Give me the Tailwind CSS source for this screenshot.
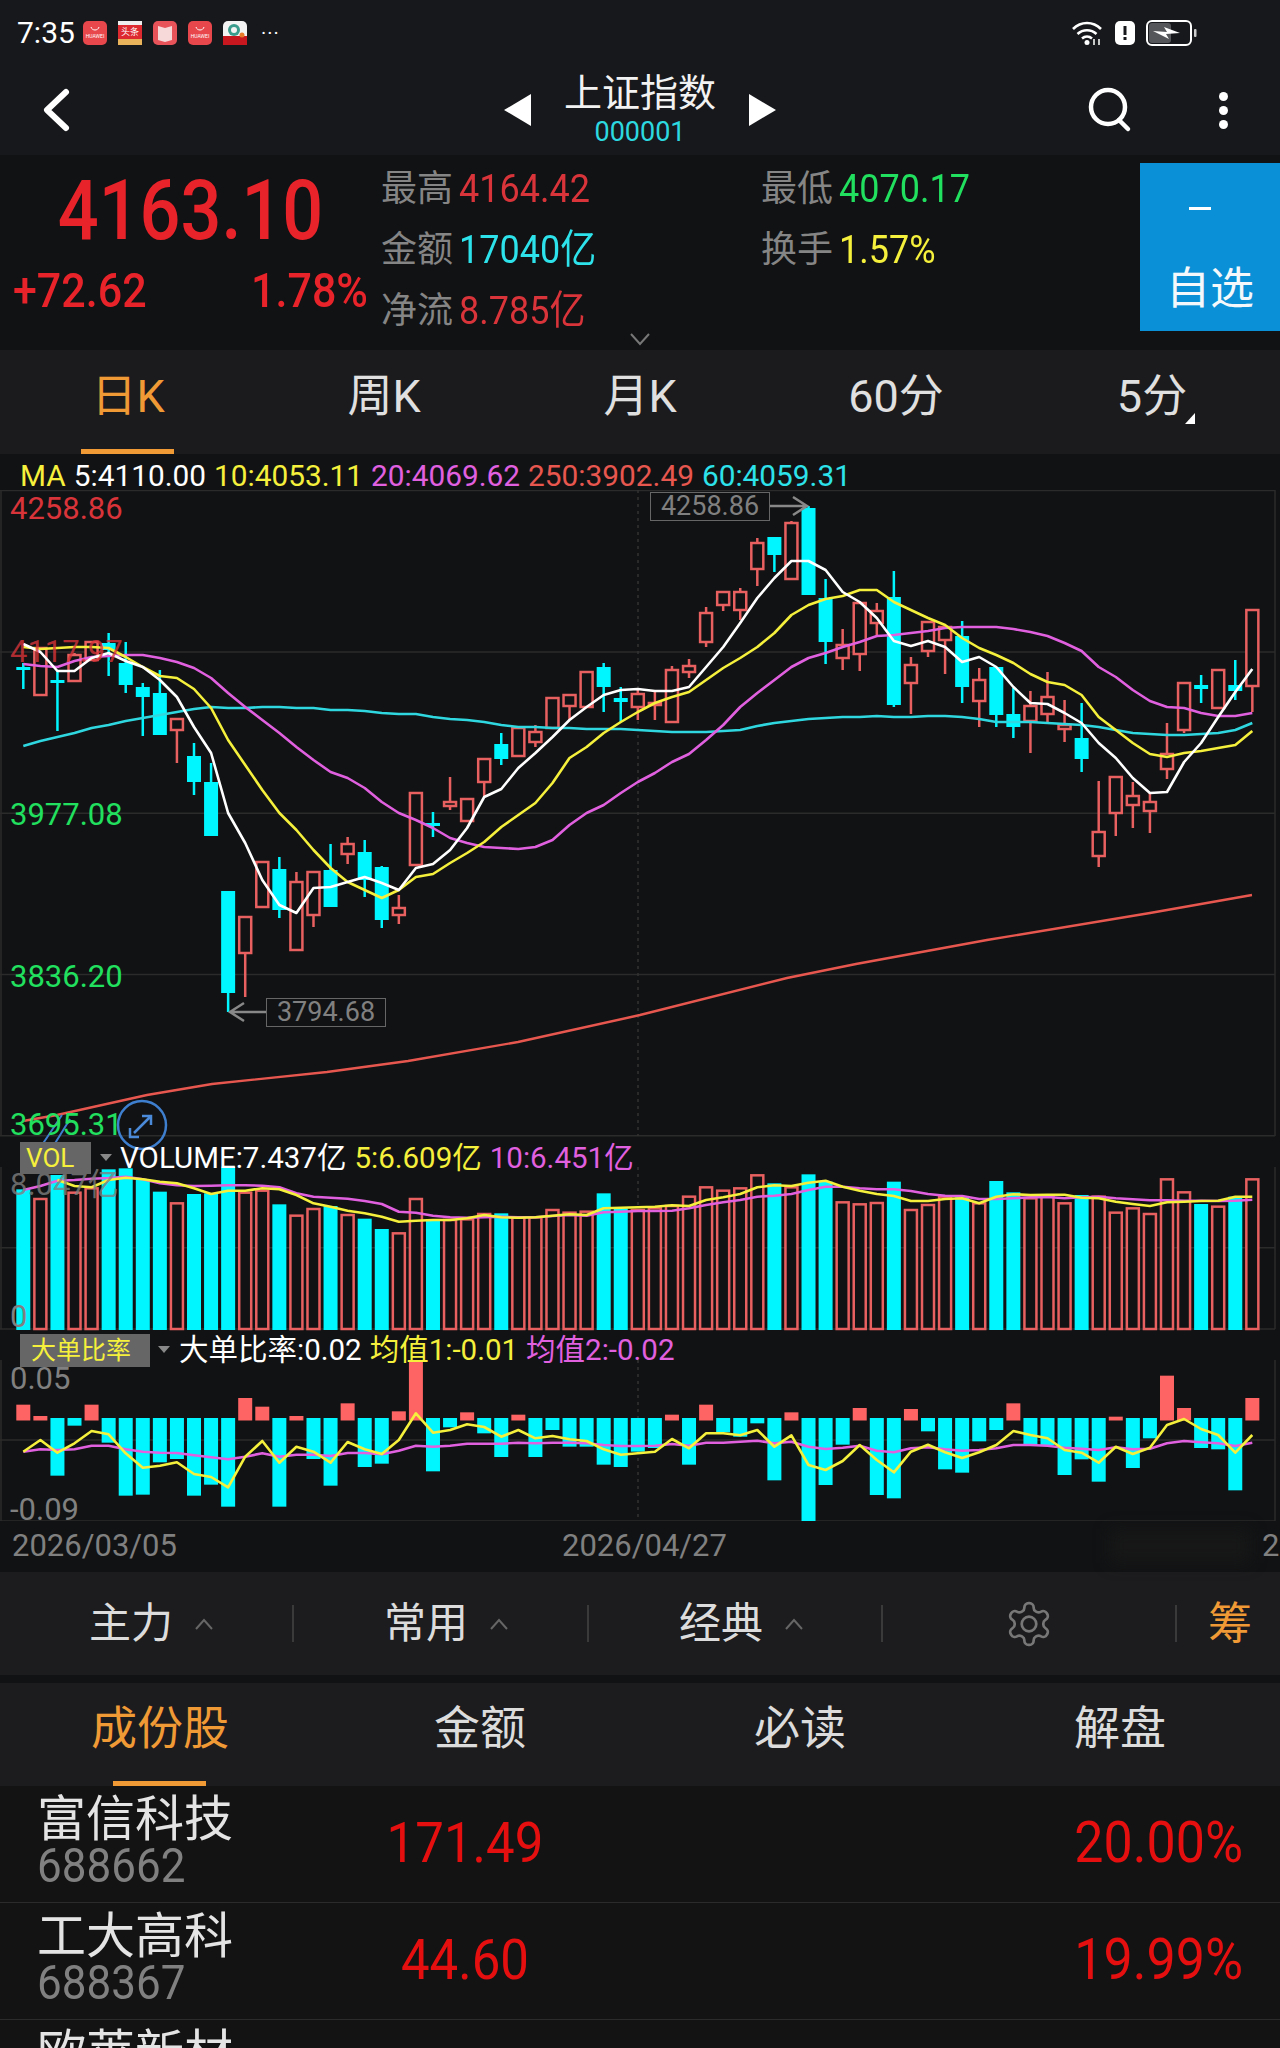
<!DOCTYPE html>
<html lang="zh">
<head>
    <meta charset="UTF-8">
    <title>上证指数</title>
    <script src="https://cdn.jsdelivr.net/npm/@tailwindcss/browser@4"></script>
</head>
<body class="bg-[#111214]">
<div class="w-[1280px] h-[2048px] overflow-hidden bg-[#111213] text-white [font-family:Roboto,'Noto_Sans_CJK_SC',sans-serif]">

    <!-- status bar + nav -->
    <div class="h-[155px] bg-[#17181b]">
        <div class="h-[66px] flex items-center pl-[17px] pr-[82px]">
            <span class="text-[30px] leading-none w-[66px]">7:35</span>
            <div class="flex gap-[11px] items-center">
                <svg width="24" height="24" viewBox="0 0 24 24"><rect width="24" height="24" rx="5" fill="#e8474c"/><path d="M8 6c1 4 7 4 8 0" stroke="#fff" fill="none"/><text x="12" y="17" font-size="5" fill="#fff" text-anchor="middle">HUAWEI</text></svg>
                <svg width="24" height="24" viewBox="0 0 24 24"><rect width="24" height="24" rx="5" fill="#dd2a30"/><rect width="24" height="4" fill="#eee"/><rect y="18" width="24" height="6" fill="#e9b35c"/><text x="12" y="14" font-size="9" fill="#fff" text-anchor="middle">头条</text></svg>
                <svg width="24" height="24" viewBox="0 0 24 24"><rect width="24" height="24" rx="5" fill="#e8535a"/><path d="M5 5l7 2 7-2v14l-7 2-7-2z" fill="#f7d9da"/></svg>
                <svg width="24" height="24" viewBox="0 0 24 24"><rect width="24" height="24" rx="5" fill="#e8474c"/><path d="M8 6c1 4 7 4 8 0" stroke="#fff" fill="none"/><text x="12" y="17" font-size="5" fill="#fff" text-anchor="middle">HUAWEI</text></svg>
                <svg width="24" height="24" viewBox="0 0 24 24"><rect width="24" height="24" rx="5" fill="#f3f3f3"/><rect y="15" width="24" height="9" fill="#c8171f"/><circle cx="11" cy="9" r="6" fill="#3a9c8c"/><circle cx="11" cy="9" r="3" fill="#f3f3f3"/><circle cx="19" cy="14" r="2.5" fill="#e87a2a"/></svg>
            </div>
            <span class="ml-[14px] text-[20px] leading-none tracking-[1px]">···</span>
            <div class="ml-auto flex items-center gap-[11px]">
                <svg width="32" height="26" viewBox="0 0 32 26" fill="none" stroke="#fff" stroke-width="2.6"><path d="M1 9c8-8 20-8 28 0"/><path d="M5.5 14c5.500-5 13.500-5 19 0"/><path d="M10 18.500c3-2.500 7-2.500 10 0"/><circle cx="15" cy="22.500" r="2.500" fill="#fff" stroke="none"/><path d="M22 19v6M27 19v6" stroke-width="1.500"/></svg>
                <svg width="20" height="24" viewBox="0 0 20 24"><rect width="20" height="24" rx="5" fill="#fff"/><rect x="8.500" y="5" width="3" height="9" fill="#17181b"/><rect x="8.500" y="16" width="3" height="3" fill="#17181b"/></svg>
                <svg width="52" height="26" viewBox="0 0 52 26" fill="none"><rect x="1" y="1" width="44" height="24" rx="5" stroke="#fff" stroke-width="2"/><rect x="3" y="3" width="22" height="20" rx="3" fill="#55565a"/><path d="M7 11l14 1-3-5 16 6-14 1 3 5z" fill="#fff"/><rect x="48" y="9" width="2.500" height="8" rx="1" fill="#ccc"/></svg>
            </div>
        </div>
        <div class="h-[88px] grid grid-cols-3 items-center">
            <div class="pl-[40px]">
                <svg width="34" height="46" viewBox="0 0 34 46" fill="none" stroke="#fff" stroke-width="6" stroke-linecap="round" stroke-linejoin="round"><path d="M26 5L7 23l19 18"/></svg>
            </div>
            <div class="flex items-center justify-center gap-[29px]">
                <svg width="27" height="32" viewBox="0 0 27 32"><path d="M27 0v32L0 16z" fill="#fff"/></svg>
                <div class="flex flex-col items-center w-[160px]">
                    <span class="text-[38px] leading-[44px] text-[#f2f2f2]">上证指数</span>
                    <span class="text-[27px] leading-[34px] text-[#2dd9e0]">000001</span>
                </div>
                <svg width="27" height="32" viewBox="0 0 27 32"><path d="M0 0v32l27-16z" fill="#fff"/></svg>
            </div>
            <div class="flex items-center justify-end pr-[52px] gap-[87px]">
                <svg width="44" height="46" viewBox="0 0 44 46" fill="none" stroke="#fff" stroke-width="4.500" stroke-linecap="round"><circle cx="20" cy="20" r="17"/><path d="M31 33l9 9"/></svg>
                <div class="flex flex-col gap-[5px]">
                    <div class="w-[9px] h-[9px] rounded-full bg-white"></div>
                    <div class="w-[9px] h-[9px] rounded-full bg-white"></div>
                    <div class="w-[9px] h-[9px] rounded-full bg-white"></div>
                </div>
            </div>
        </div>
        <div class="h-px"></div>
    </div>

    <!-- quote -->
    <div class="relative h-[195px] flex bg-[#111213]">
        <div class="w-[381px] flex flex-col">
            <div class="mt-[20px] text-center text-[72px] leading-[72px] font-medium text-[#e8232a] scale-y-115">4163.10</div>
            <div class="mt-[18px] flex justify-between px-[13px] text-[43px] leading-[50px] font-medium text-[#e8232a]">
                <span class="scale-y-110">+72.62</span><span class="scale-y-110">1.78%</span>
            </div>
        </div>
        <div class="w-[380px] flex flex-col pt-[4px] text-[36px] leading-[61px]">
            <div class="flex gap-[6px]"><span class="text-[#858585]">最高</span><span class="text-[#d8343a] scale-y-110">4164.42</span></div>
            <div class="flex gap-[6px]"><span class="text-[#858585]">金额</span><span class="text-[#2de2ea] scale-y-110">17040亿</span></div>
            <div class="flex gap-[6px]"><span class="text-[#858585]">净流</span><span class="text-[#d8343a] scale-y-110">8.785亿</span></div>
        </div>
        <div class="w-[519px] flex">
            <div class="flex flex-col pt-[4px] text-[36px] leading-[61px]">
                <div class="flex gap-[6px]"><span class="text-[#858585]">最低</span><span class="text-[#22e05f] scale-y-110">4070.17</span></div>
                <div class="flex gap-[6px]"><span class="text-[#858585]">换手</span><span class="text-[#f5f03c] scale-y-110">1.57%</span></div>
            </div>
            <div class="ml-auto mt-[8px] w-[140px] h-[168px] bg-[#0a90d6] flex flex-col items-center pt-[44px]">
                <div class="mr-[20px] w-[22px] h-[3px] bg-white"></div>
                <span class="mt-[54px] text-[44px] leading-[50px] text-[#f4f8fb]">自选</span>
            </div>
        </div>
        <svg class="absolute left-[630px] top-[177px]" width="20" height="14" viewBox="0 0 20 14" fill="none" stroke="#777" stroke-width="2"><path d="M1 2l9 10 9-10"/></svg>
    </div>

    <!-- period tabs -->
    <div class="h-[104px] grid grid-cols-5 bg-[#1b1b1d] text-[45px] leading-[48px] text-[#e0e0e0]">
        <div class="relative flex justify-center pt-[23px] text-[#f09a36]">日K<div class="absolute bottom-0 left-[81px] w-[93px] h-[5px] bg-[#f09a36]"></div></div>
        <div class="flex justify-center pt-[23px]">周K</div>
        <div class="flex justify-center pt-[23px]">月K</div>
        <div class="flex justify-center pt-[23px]">60分</div>
        <div class="relative flex justify-center pt-[23px]">5分<div class="absolute left-[161px] top-[63px] w-0 h-0 border-l-[10px] border-l-transparent border-b-[11px] border-b-white"></div></div>
    </div>

    <!-- MA legend -->
    <div class="h-[36px] flex gap-[8px] pl-[20px] text-[29.8px] leading-[43px] whitespace-nowrap">
        <span class="text-[#f5f03c]">MA</span>
        <span class="text-white">5:4110.00</span>
        <span class="text-[#f5f03c]">10:4053.11</span>
        <span class="text-[#e060e0]">20:4069.62</span>
        <span class="text-[#e8574f]">250:3902.49</span>
        <span class="text-[#2de2ea]">60:4059.31</span>
    </div>

    <!-- charts -->
    <div class="relative h-[1031px]">
        <svg id="chart" class="absolute inset-0" width="1280" height="1031" viewBox="0 490 1280 1031"></svg>

        <span class="absolute left-[10px] top-[1px] text-[31px] leading-[36px] text-[#d8343a]">4258.86</span>
        <span class="absolute left-[10px] top-[144px] text-[31px] leading-[36px] text-[#d8343a]/80">4117.97</span>
        <span class="absolute left-[10px] top-[307px] text-[31px] leading-[36px] text-[#22e05f]">3977.08</span>
        <span class="absolute left-[10px] top-[469px] text-[31px] leading-[36px] text-[#22e05f]">3836.20</span>
        <span class="absolute left-[10px] top-[617px] text-[31px] leading-[36px] text-[#22e05f]">3695.31</span>
        <span class="absolute left-[10px] top-[677px] text-[31px] leading-[36px] text-[#808080]/80">8.047亿</span>
        <span class="absolute left-[10px] top-[809px] text-[31px] leading-[36px] text-[#808080]">0</span>
        <span class="absolute left-[10px] top-[871px] text-[31px] leading-[36px] text-[#808080]">0.05</span>
        <span class="absolute left-[10px] top-[1002px] text-[31px] leading-[36px] text-[#808080]">-0.09</span>

        <div class="absolute left-[650px] top-[2px] w-[120px] h-[29px] border border-[#666] flex items-center justify-center text-[27px] text-[#808080]">4258.86</div>
        <div class="absolute left-[266px] top-[508px] w-[120px] h-[29px] border border-[#666] flex items-center justify-center text-[27px] text-[#808080]">3794.68</div>

        <div class="absolute left-[20px] top-[652px] w-[71px] h-[32px] bg-[#666] flex items-center pl-[6px] text-[26px] text-[#f5f03c]">VOL</div>
        <div class="absolute left-[100px] top-[664px] w-0 h-0 border-x-[6px] border-x-transparent border-t-[7px] border-t-[#888]"></div>
        <div class="absolute left-[120px] top-[650px] flex gap-[8px] text-[29.5px] leading-[36px] whitespace-nowrap">
            <span class="text-white">VOLUME:7.437亿</span>
            <span class="text-[#f5f03c]">5:6.609亿</span>
            <span class="text-[#e060e0]">10:6.451亿</span>
        </div>

        <div class="absolute left-[20px] top-[844px] w-[130px] h-[33px] bg-[#666] flex items-center pl-[11px] text-[25px] text-[#f5f03c]">大单比率</div>
        <div class="absolute left-[158px] top-[856px] w-0 h-0 border-x-[6px] border-x-transparent border-t-[7px] border-t-[#888]"></div>
        <div class="absolute left-[179px] top-[842px] flex gap-[8px] text-[29.5px] leading-[36px] whitespace-nowrap">
            <span class="text-white">大单比率:0.02</span>
            <span class="text-[#f5f03c]">均值1:-0.01</span>
            <span class="text-[#e060e0]">均值2:-0.02</span>
        </div>
    </div>

    <!-- dates -->
    <div class="relative h-[51px] text-[31px] leading-[50px] text-[#808080]">
        <span class="absolute left-[12px] top-0">2026/03/05</span>
        <span class="absolute left-[562px] top-0">2026/04/27</span>
        <div class="absolute left-[1110px] top-[8px] w-[140px] h-[34px] bg-[#1a1a1a]/60 blur-sm"></div>
        <span class="absolute left-[1262px] top-0">2</span>
    </div>

    <!-- toolbar -->
    <div class="h-[103px] flex items-center bg-[#1c1c1e] text-[42px] leading-[46px] text-[#dcdcdc]">
        <div class="w-[292px] flex items-center pl-[89px] gap-[22px]">主力<svg width="18" height="12" viewBox="0 0 18 12" fill="none" stroke="#666" stroke-width="2"><path d="M1 11l8-9 8 9"/></svg></div>
        <div class="h-[37px] w-[2px] bg-[#3a3a3a]"></div>
        <div class="w-[293px] flex items-center pl-[90px] gap-[22px]">常用<svg width="18" height="12" viewBox="0 0 18 12" fill="none" stroke="#666" stroke-width="2"><path d="M1 11l8-9 8 9"/></svg></div>
        <div class="h-[37px] w-[2px] bg-[#3a3a3a]"></div>
        <div class="w-[292px] flex items-center pl-[90px] gap-[22px]">经典<svg width="18" height="12" viewBox="0 0 18 12" fill="none" stroke="#666" stroke-width="2"><path d="M1 11l8-9 8 9"/></svg></div>
        <div class="h-[37px] w-[2px] bg-[#3a3a3a]"></div>
        <div class="w-[292px] flex items-center justify-center">
            <svg width="50" height="50" viewBox="0 0 24 24" fill="none" stroke="#777" stroke-width="1.300"><path d="M12.220 2h-.44a2 2 0 0 0-2 2v.18a2 2 0 0 1-1 1.730l-.43.25a2 2 0 0 1-2 0l-.15-.08a2 2 0 0 0-2.730.73l-.22.38a2 2 0 0 0 .73 2.730l.15.1a2 2 0 0 1 1 1.720v.51a2 2 0 0 1-1 1.740l-.15.09a2 2 0 0 0-.73 2.730l.22.38a2 2 0 0 0 2.730.73l.15-.08a2 2 0 0 1 2 0l.43.25a2 2 0 0 1 1 1.730V20a2 2 0 0 0 2 2h.44a2 2 0 0 0 2-2v-.18a2 2 0 0 1 1-1.730l.43-.25a2 2 0 0 1 2 0l.15.08a2 2 0 0 0 2.730-.73l.22-.39a2 2 0 0 0-.73-2.730l-.15-.08a2 2 0 0 1-1-1.740v-.5a2 2 0 0 1 1-1.740l.15-.09a2 2 0 0 0 .73-2.730l-.22-.38a2 2 0 0 0-2.730-.73l-.15.08a2 2 0 0 1-2 0l-.43-.25a2 2 0 0 1-1-1.730V4a2 2 0 0 0-2-2z"/><circle cx="12" cy="12" r="3.500"/></svg>
        </div>
        <div class="h-[37px] w-[2px] bg-[#3a3a3a]"></div>
        <div class="pl-[31px] text-[44px] text-[#f09a36]">筹</div>
    </div>
    <div class="h-[8px] bg-[#111213]"></div>

    <!-- bottom tabs -->
    <div class="h-[103px] grid grid-cols-4 bg-[#1c1c1e] text-[46px] leading-[50px] text-[#dcdcdc]">
        <div class="relative flex justify-center pt-[20px] text-[#f09a36]">成份股<div class="absolute bottom-0 left-[113px] w-[93px] h-[5px] bg-[#f09a36]"></div></div>
        <div class="flex justify-center pt-[20px]">金额</div>
        <div class="flex justify-center pt-[20px]">必读</div>
        <div class="flex justify-center pt-[20px]">解盘</div>
    </div>

    <!-- stock rows -->
    <div class="h-[117px] flex border-b border-[#2b2b2b] bg-[#131314]">
        <div class="w-[350px] pl-[37px] flex flex-col pt-[8px]">
            <span class="text-[49px] leading-[52px] text-[#e4e4e4]">富信科技</span>
            <span class="text-[44px] leading-[41px] text-[#808080] scale-y-110 origin-left">688662</span>
        </div>
        <div class="w-[230px] text-center text-[51px] leading-[114px] text-[#e60f0f] scale-y-110">171.49</div>
        <div class="ml-auto pr-[37px] text-[52px] leading-[114px] text-[#e60f0f] scale-y-110">20.00%</div>
    </div>
    <div class="h-[117px] flex border-b border-[#2b2b2b] bg-[#131314]">
        <div class="w-[350px] pl-[37px] flex flex-col pt-[8px]">
            <span class="text-[49px] leading-[52px] text-[#e4e4e4]">工大高科</span>
            <span class="text-[44px] leading-[41px] text-[#808080] scale-y-110 origin-left">688367</span>
        </div>
        <div class="w-[230px] text-center text-[51px] leading-[114px] text-[#e60f0f] scale-y-110">44.60</div>
        <div class="ml-auto pr-[37px] text-[52px] leading-[114px] text-[#e60f0f] scale-y-110">19.99%</div>
    </div>
    <div class="h-[60px] pl-[37px] pt-[8px] bg-[#131314] text-[49px] leading-[52px] text-[#e4e4e4]">欧莱新材</div>
</div>

<script>
    // chart data read off the screenshot, in page pixels
    const UP = '#e86060', DOWN = '#00f6ff';
    const X0 = 23.3, DX = 17.07;
    const xAt = i => X0 + DX * i;

    // [kind, high, bodyTop, bodyBottom, low]
    const candles = [
        ['c',663,667,670,689],['r',648,648,695,695],['c',670,680,683,731],['r',653,655,681,681],['r',642,642,660,660],
        ['c',633,643,650,676],['c',642,663,685,693],['c',683,687,697,736],['c',670,693,735,735],['r',719,719,730,763],
        ['c',743,756,782,795],['c',763,782,836,836],['c',891,891,993,1012],['r',917,917,953,997],['r',862,862,907,907],
        ['c',857,869,910,918],['r',872,882,950,950],['r',872,872,915,927],['c',844,870,907,907],['r',837,844,854,864],
        ['c',840,852,880,897],['c',866,867,920,928],['r',895,908,915,924],['r',793,793,865,865],['c',812,823,826,837],
        ['r',777,802,806,810],['r',799,799,821,821],['r',759,759,782,797],['c',733,744,759,765],['r',728,728,756,756],
        ['r',725,732,742,747],['r',698,698,728,728],['r',695,695,706,720],['r',672,672,707,707],['c',663,667,687,712],
        ['c',687,698,702,722],['r',688,694,707,720],['r',692,703,705,720],['r',666,670,722,722],['r',659,666,672,678],
        ['r',607,613,642,647],['r',592,592,605,611],['r',588,592,610,620],['r',538,543,569,586],['c',537,537,555,572],
        ['r',521,523,579,579],['c',506,508,595,595],['c',579,598,642,664],['r',629,645,658,670],['r',603,603,654,671],
        ['r',603,611,623,635],['c',571,597,705,707],['r',657,665,683,714],['r',622,622,651,657],['r',625,627,640,674],
        ['c',621,636,687,703],['r',668,680,701,727],['c',667,667,715,727],['c',688,714,727,738],['r',691,706,721,753],
        ['r',672,697,714,722],['r',700,725,729,742],['c',703,738,759,772],['r',781,832,856,867],['r',777,777,813,836],
        ['r',782,796,805,828],['r',793,802,811,833],['r',723,754,769,779],['r',683,683,730,733],['c',675,685,689,703],
        ['r',670,670,708,708],['c',660,685,691,700],['r',610,610,686,712]
    ];

    const ma5 = [644,652,671,671,658,653,661,667,680,697,727,753,813,843,880,905,913,888,887,882,877,883,890,868,864,850,828,797,789,768,753,737,720,707,695,690,689,691,691,687,667,647,623,598,578,561,561,570,592,602,618,641,646,641,647,662,657,667,687,703,704,713,723,743,758,778,793,792,762,743,717,692,669];
    const ma10 = [647,649,648,647,647,648,657,667,676,678,689,708,740,765,790,813,830,850,868,882,890,898,890,877,874,863,853,842,827,815,803,783,758,747,733,722,712,703,697,692,680,668,658,647,633,615,605,599,596,590,590,602,610,618,625,638,648,655,663,674,682,685,695,717,730,743,754,757,753,751,748,745,731];
    const ma20 = [664,666,667,661,657,656,655,655,658,662,668,678,693,707,720,733,747,760,772,778,788,802,813,820,828,838,843,847,848,849,847,840,825,813,805,793,782,773,762,754,740,725,707,693,680,667,658,653,647,642,636,635,633,631,628,627,627,627,629,632,636,643,651,667,677,690,701,707,708,713,716,716,713];
    const ma60 = [746,741,737,733,728,725,721,718,715,712,709,707,708,708,707,707,708,708,710,710,711,713,714,714,717,719,720,722,725,727,727,728,728,729,729,729,730,731,732,732,732,731,730,726,723,721,719,718,717,717,716,717,717,716,716,717,719,722,722,722,723,724,725,727,730,733,734,735,735,734,733,730,723];
    const ma250 = [[23,1121],[57,1115],[147,1095],[212,1084],[327,1072],[408,1061],[518,1042],[640,1015],[787,978],[856,964],[987,940],[1150,913],[1252,895]];

    // volume: bar tops, y = 1100 + v / 3
    const vol = [
        ['c',268],['r',297],['c',225],['r',278],['r',265],['c',208],['c',205],['c',240],['c',275],['r',310],
        ['c',282],['c',280],['c',200],['r',278],['r',272],['c',313],['r',347],['r',327],['c',318],['r',345],
        ['c',356],['c',387],['r',400],['r',297],['c',360],['r',360],['r',358],['r',342],['c',340],['r',352],
        ['r',352],['r',330],['r',338],['r',335],['c',280],['c',325],['r',330],['r',325],['r',318],['r',290],
        ['r',262],['r',272],['r',265],['r',226],['c',250],['r',262],['c',223],['c',245],['r',307],['r',313],
        ['r',309],['c',245],['r',330],['r',315],['r',290],['c',292],['r',310],['c',243],['c',277],['r',295],
        ['r',288],['r',310],['c',285],['r',290],['r',338],['r',325],['r',342],['r',238],['r',277],['c',312],
        ['r',320],['c',290],['r',238]
    ];
    const volYellow = [null,null,240,258,262,240,233,238,245,250,265,282,272,272,265,268,285,310,320,332,340,350,365,362,360,360,355,345,352,353,352,347,343,345,325,323,322,320,316,318,300,292,282,262,256,258,248,242,260,272,282,288,303,303,297,295,310,290,283,285,284,284,293,295,305,312,318,307,305,303,302,290,290];
    const volPink = [270,258,242,240,236,234,230,238,250,256,258,257,256,256,257,262,280,290,293,296,303,312,335,338,347,352,353,352,350,352,352,348,345,347,337,335,333,333,332,325,315,307,300,290,287,282,270,260,260,265,268,268,273,282,287,288,297,297,295,292,291,295,292,290,295,298,301,301,302,302,303,302,299];

    // big order ratio: bar ends, y = 1330 + v / 3
    const ratio = [
        ['r',224],['r',258],['c',437],['c',287],['r',224],['c',338],['c',497],['c',494],['c',397],['c',387],
        ['c',497],['c',464],['c',530],['r',204],['r',230],['c',530],['r',258],['c',387],['c',467],['r',220],
        ['c',411],['c',401],['r',244],['r',90],['c',424],['c',292],['r',247],['c',310],['c',381],['r',254],
        ['c',381],['c',300],['c',350],['c',350],['c',404],['c',411],['c',365],['c',354],['r',254],['c',404],
        ['r',224],['c',307],['c',320],['c',280],['c',451],['r',247],['c',578],['c',465],['c',344],['r',234],
        ['c',495],['c',505],['r',237],['c',304],['c',418],['c',428],['c',334],['c',300],['r',220],['c',345],
        ['c',345],['c',435],['c',388],['c',455],['r',260],['c',414],['c',325],['r',137],['r',234],['c',354],
        ['c',358],['c',481],['r',204]
    ];
    const ratioYellow = [365,330,368,340,303,313,370,413,407,397,432,441,472,380,333,398,350,365,398,336,358,372,330,250,308,300,283,291,320,300,325,318,328,333,358,374,370,365,327,355,310,310,316,300,350,316,405,420,393,345,390,427,365,344,367,384,367,345,303,315,325,360,368,398,350,372,353,285,267,297,315,368,315];
    const ratioPink = [365,358,360,358,347,347,358,365,368,369,376,382,388,380,370,380,374,374,378,369,369,373,362,347,350,347,341,341,341,338,340,338,338,340,345,348,348,347,342,347,338,338,335,332,340,335,350,357,353,347,362,367,355,352,358,362,360,355,345,345,347,353,356,360,352,358,356,340,333,337,340,348,338];

    let out = '';

    // grid + frames
    const GRID = '#2b2b2b';
    [490.6, 651.9, 813.2, 974.5, 1135.8, 1247.7, 1329, 1440, 1521].forEach(y => {
        out += `<line x1="0" x2="1275" y1="${y}" y2="${y}" stroke="${GRID}" stroke-width="1.5"/>`;
    });
    [[490, 1136], [1167, 1329], [1360, 1521]].forEach(([a, b]) => {
        out += `<line x1="1275" x2="1275" y1="${a}" y2="${b}" stroke="${GRID}" stroke-width="1.5"/>`;
        out += `<line x1="1" x2="1" y1="${a}" y2="${b}" stroke="${GRID}" stroke-width="1.5"/>`;
        out += `<line x1="638" x2="638" y1="${a}" y2="${b}" stroke="#333" stroke-width="1.5" stroke-dasharray="3 4"/>`;
    });

    // candles
    candles.forEach(([k, hi, top, bot, lo], i) => {
        const x = xAt(i), c = k === 'r' ? UP : DOWN;
        out += `<line x1="${x}" x2="${x}" y1="${hi}" y2="${lo}" stroke="${c}" stroke-width="2.5"/>`;
        if (k === 'r') {
            out += `<rect x="${x - 6}" y="${top}" width="12" height="${Math.max(bot - top, 2)}" fill="#111213" stroke="${c}" stroke-width="2.5"/>`;
        } else {
            out += `<rect x="${x - 7}" y="${top}" width="14" height="${Math.max(bot - top, 3)}" fill="${c}"/>`;
        }
    });

    const line = (ys, color, map, w = 2.6) => {
        const pts = ys.map((v, i) => v === null ? null : `${xAt(i).toFixed(1)},${map(v).toFixed(1)}`).filter(Boolean).join(' ');
        out += `<polyline points="${pts}" fill="none" stroke="${color}" stroke-width="${w}" stroke-linejoin="round"/>`;
    };

    line(ma60, '#2fd8e0', v => v);
    out += `<polyline points="${ma250.map(p => p.join(',')).join(' ')}" fill="none" stroke="#e8574f" stroke-width="2.4"/>`;
    line(ma20, '#e060e0', v => v);
    line(ma10, '#f5f03c', v => v);
    line(ma5, '#ffffff', v => v);

    // high / low arrows
    out += `<path d="M770 506h37M793 497l14 9-14 9" fill="none" stroke="#888" stroke-width="2.5"/>`;
    out += `<path d="M266 1012h-36M244 1003l-14 9 14 9" fill="none" stroke="#888" stroke-width="2.5"/>`;

    // volume
    vol.forEach(([k, v], i) => {
        const x = xAt(i), y = 1100 + v / 3;
        if (k === 'r') out += `<rect x="${x - 6}" y="${y}" width="12" height="${1329 - y}" fill="#111213" stroke="${UP}" stroke-width="2.5"/>`;
        else out += `<rect x="${x - 7}" y="${y}" width="14" height="${1330 - y}" fill="${DOWN}"/>`;
    });
    line(volPink, '#e060e0', v => 1100 + v / 3);
    line(volYellow, '#f5f03c', v => 1100 + v / 3);

    // big order ratio
    ratio.forEach(([k, v], i) => {
        const x = xAt(i), y = 1330 + v / 3;
        if (k === 'r') out += `<rect x="${x - 7}" y="${y}" width="14" height="${1420.5 - y}" fill="#ff6464"/>`;
        else out += `<rect x="${x - 7}" y="1418" width="14" height="${y - 1418}" fill="${DOWN}"/>`;
    });
    line(ratioPink, '#e060e0', v => 1330 + v / 3);
    line(ratioYellow, '#f5f03c', v => 1330 + v / 3);

    // expand button over the price axis
    out += `<circle cx="142" cy="1125" r="24" fill="none" stroke="#3f7fd0" stroke-width="2.5"/>`;
    out += `<path d="M134 1133l17-17M142 1116h9v9M130 1128v9h9" fill="none" stroke="#4a8ad8" stroke-width="2.5"/>`;
    out += `<path d="M42 1145l20-30M54 1145l16-26" fill="none" stroke="#3f7fd0" stroke-width="2"/>`;

    document.getElementById('chart').innerHTML = out;
</script>
</body>
</html>
